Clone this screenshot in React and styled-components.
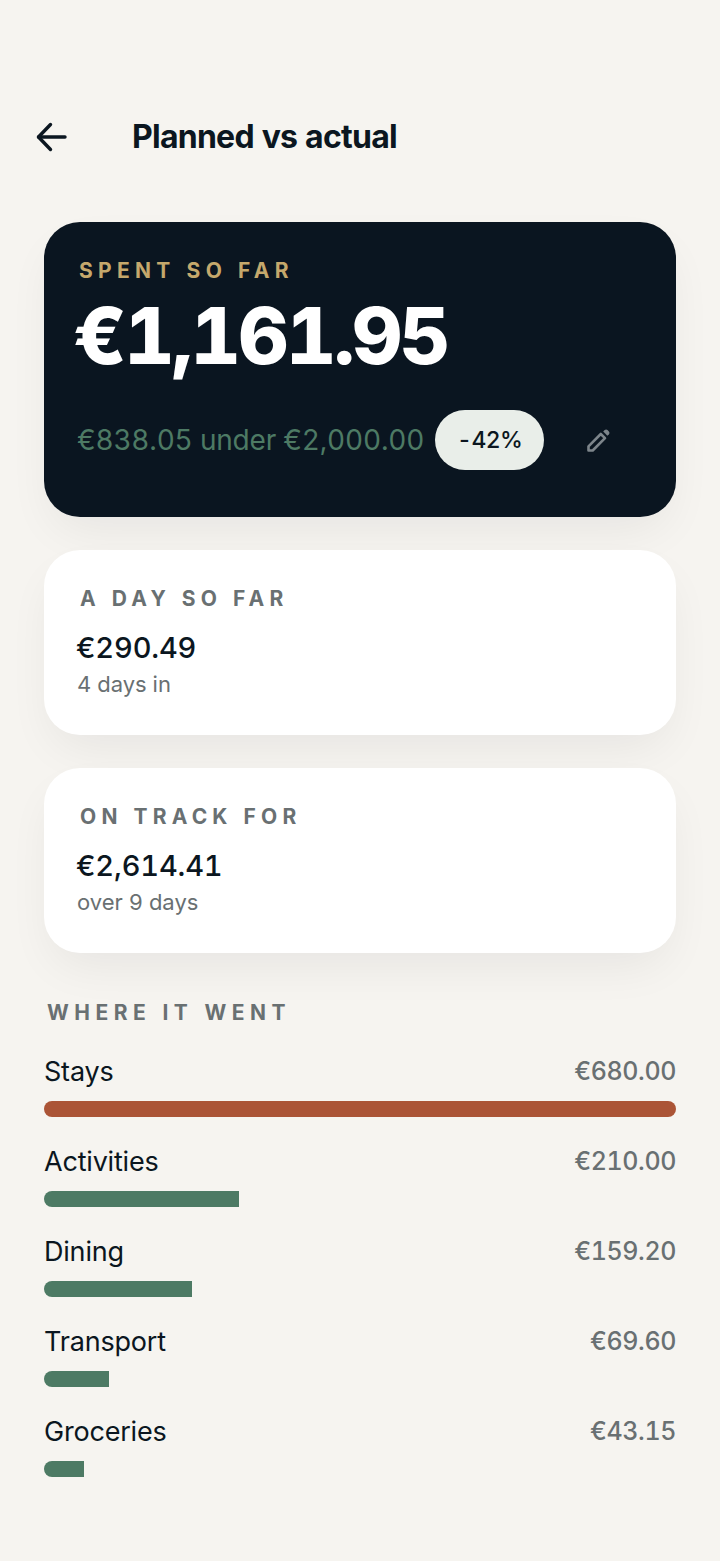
import styled, { createGlobalStyle } from 'styled-components';

const categories = [
  { name: 'Stays', amount: 680, tone: '#ab5436' },
  { name: 'Activities', amount: 210, tone: '#4d7a64' },
  { name: 'Dining', amount: 159.2, tone: '#4d7a64' },
  { name: 'Transport', amount: 69.6, tone: '#4d7a64' },
  { name: 'Groceries', amount: 43.15, tone: '#4d7a64' },
];

const stats = [
  { label: 'A DAY SO FAR', value: '€290.49', note: '4 days in' },
  { label: 'ON TRACK FOR', value: '€2,614.41', note: 'over 9 days' },
];

const maxAmount = Math.max(...categories.map((c) => c.amount));

const App = () => (
  <Page>
    <GlobalStyle />
    <Header>
      <BackButton aria-label="Back">
        <svg width="32" height="32" viewBox="0 0 32 32" fill="none" stroke="#0b1620" strokeWidth="3.4" strokeLinecap="round" strokeLinejoin="round">
          <path d="M3.5 16H30" />
          <path d="M15.5 3.5 3.5 16l12 12.5" />
        </svg>
      </BackButton>
      <Title>Planned vs actual</Title>
    </Header>

    <Cards>
      <HeroCard>
        <HeroLabel>SPENT SO FAR</HeroLabel>
        <HeroAmount>€1,161.95</HeroAmount>
        <HeroFooter>
          <HeroNote>€838.05 under €2,000.00</HeroNote>
          <Pill>-42%</Pill>
          <EditIcon viewBox="0 0 24 24" aria-hidden="true">
            <path d="M1.5 22.5v-4.2L13.8 6l4.2 4.2L5.7 22.5z" fill="none" stroke="#7d858b" strokeWidth="2.6" strokeLinejoin="round" />
            <path d="M16.2 3.6l1.5-1.5a2 2 0 0 1 2.8 0l1.4 1.4a2 2 0 0 1 0 2.8l-1.5 1.5z" fill="#7d858b" />
          </EditIcon>
        </HeroFooter>
      </HeroCard>

      {stats.map((stat) => (
        <StatCard key={stat.label}>
          <StatLabel>{stat.label}</StatLabel>
          <StatValue>{stat.value}</StatValue>
          <StatNote>{stat.note}</StatNote>
        </StatCard>
      ))}
    </Cards>

    <SectionLabel>WHERE IT WENT</SectionLabel>
    <Breakdown>
      {categories.map((cat) => (
        <Row key={cat.name}>
          <RowHead>
            <RowName>{cat.name}</RowName>
            <RowAmount>€{cat.amount.toFixed(2)}</RowAmount>
          </RowHead>
          <Track>
            <Fill $tone={cat.tone} style={{ width: `${(cat.amount / maxAmount) * 100}%` }} />
          </Track>
        </Row>
      ))}
    </Breakdown>
  </Page>
);

export default App;

const GlobalStyle = createGlobalStyle`
  html, body {
    margin: 0;
    padding: 0;
    background: #f6f4f0;
  }

  * {
    box-sizing: border-box;
  }
`;

const Page = styled.div`
  width: 720px;
  height: 1561px;
  overflow: hidden;
  padding: 113px 44px 0;
  background: #f6f4f0;
  font-family: Inter, 'Liberation Sans', sans-serif;
  font-variant-numeric: tabular-nums;
  color: #0b1620;
`;

const Header = styled.header`
  display: flex;
  align-items: center;
  gap: 65px;
  height: 48px;
  margin-left: -9px;
`;

const BackButton = styled.button`
  display: flex;
  width: 32px;
  height: 32px;
  padding: 0;
  border: 0;
  background: none;
`;

const Title = styled.h1`
  margin: 0;
  font-size: 32px;
  font-weight: 700;
  letter-spacing: -0.75px;
  line-height: 48px;
`;

const Cards = styled.div`
  display: flex;
  flex-direction: column;
  gap: 33px;
  margin-top: 61px;
`;

const HeroCard = styled.section`
  height: 295px;
  padding: 36px 33px 0;
  border-radius: 36px;
  background: #0a1520;
  box-shadow: 0 20px 48px -10px rgba(10, 21, 32, 0.07);
`;

const HeroLabel = styled.div`
  margin-left: 2px;
  font-size: 21px;
  font-weight: 700;
  line-height: 26px;
  letter-spacing: 5.3px;
  color: #c5a86c;
`;

const HeroAmount = styled.div`
  margin-top: 13px;
  margin-left: -4px;
  font-size: 78px;
  font-weight: 800;
  line-height: 78px;
  letter-spacing: -2.6px;
  color: #ffffff;
`;

const HeroFooter = styled.div`
  display: flex;
  align-items: center;
  margin-top: 35px;
`;

const HeroNote = styled.span`
  font-size: 28px;
  letter-spacing: -0.2px;
  color: #4d7a64;
`;

const Pill = styled.span`
  display: flex;
  align-items: center;
  justify-content: center;
  width: 109px;
  height: 60px;
  margin-left: 11px;
  border-radius: 30px;
  background: #e9eee9;
  font-size: 23px;
  font-weight: 500;
  letter-spacing: -0.6px;
  color: #0b1620;
`;

const EditIcon = styled.svg`
  width: 24px;
  height: 24px;
  margin-left: 43px;
`;

const StatCard = styled.section`
  height: 185px;
  padding: 36px 33px 0;
  border-radius: 36px;
  background: #ffffff;
  box-shadow: 0 20px 48px -10px rgba(10, 21, 32, 0.07);
`;

const StatLabel = styled.div`
  margin-left: 3px;
  font-size: 21px;
  font-weight: 700;
  line-height: 26px;
  letter-spacing: 5.2px;
  color: #697072;
`;

const StatValue = styled.div`
  margin-top: 18px;
  margin-left: -1px;
  font-size: 29px;
  font-weight: 500;
  line-height: 36px;
  letter-spacing: -0.15px;
  color: #0b1620;
`;

const StatNote = styled.div`
  margin-top: 3px;
  font-size: 22px;
  line-height: 30px;
  color: #697072;
`;

const SectionLabel = styled.h2`
  margin: 47px 0 0 3px;
  font-size: 21px;
  font-weight: 700;
  line-height: 26px;
  letter-spacing: 5.5px;
  color: #697072;
`;

const Breakdown = styled.div`
  display: flex;
  flex-direction: column;
  gap: 27px;
  margin-top: 28px;
`;

const Row = styled.div`
  display: flex;
  flex-direction: column;
  gap: 13px;
`;

const RowHead = styled.div`
  display: flex;
  align-items: center;
  justify-content: space-between;
  height: 34px;
`;

const RowName = styled.span`
  font-size: 27px;
  letter-spacing: -0.2px;
  color: #0b1620;
`;

const RowAmount = styled.span`
  font-size: 25px;
  font-weight: 500;
  letter-spacing: -0.4px;
  color: #697072;
`;

const Track = styled.div`
  height: 16px;
  overflow: hidden;
  border-radius: 8px;
`;

const Fill = styled.div`
  height: 100%;
  background: ${(p) => p.$tone};
`;
